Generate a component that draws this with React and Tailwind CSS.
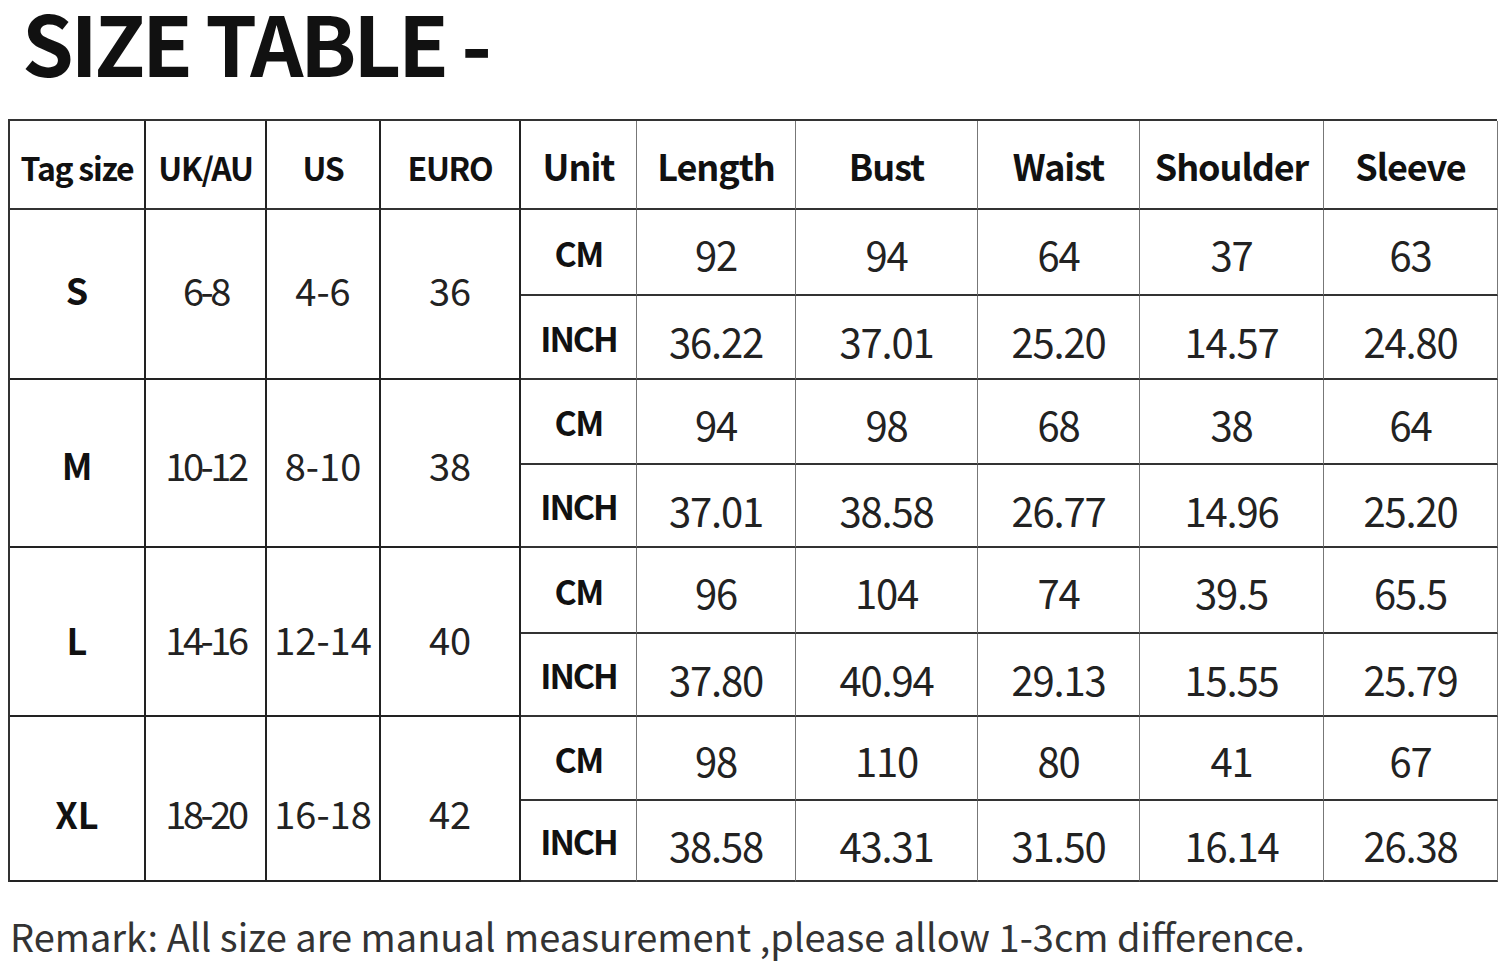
import React from 'react';

const headers = ['Tag size', 'UK/AU', 'US', 'EURO', 'Unit', 'Length', 'Bust', 'Waist', 'Shoulder', 'Sleeve'];

// pad nudges the merged size cells the way the original artwork sits
const sizes = [
    { tag: 'S', uk: '6-8', us: '4-6', euro: '36', pad: 'pb-[10px]', cm: ['92', '94', '64', '37', '63'], inch: ['36.22', '37.01', '25.20', '14.57', '24.80'] },
    { tag: 'M', uk: '10-12', us: '8-10', euro: '38', pad: 'pt-[2px]', cm: ['94', '98', '68', '38', '64'], inch: ['37.01', '38.58', '26.77', '14.96', '25.20'] },
    { tag: 'L', uk: '14-16', us: '12-14', euro: '40', pad: 'pt-[14px]', cm: ['96', '104', '74', '39.5', '65.5'], inch: ['37.80', '40.94', '29.13', '15.55', '25.79'] },
    { tag: 'XL', uk: '18-20', us: '16-18', euro: '42', pad: 'pt-[28px]', cm: ['98', '110', '80', '41', '67'], inch: ['38.58', '43.31', '31.50', '16.14', '26.38'] },
];

const font = { fontFamily: '"Noto Sans CJK SC", "Noto Sans", sans-serif' };

const App = () => {
    return (
        <div className="w-[1500px] h-[962px] bg-white text-black overflow-hidden" style={font}>
            <div className="h-[119px] pl-[22px]">
                <h1 className="w-[560px] pr-4 text-[83px] leading-[83px] font-bold tracking-[-0.04em] text-[#111] whitespace-nowrap">
                    SIZE TABLE -
                </h1>
            </div>

            <div className="ml-[8px] w-[1489px] grid grid-cols-[136px_121px_114px_140px_116px_159px_182px_162px_184px_174px] grid-rows-[89px_86px_84px_85px_83px_86px_83px_84px_81px] border-t-2 border-l-2 border-[#333]">
                {headers.map((h, i) => (
                    <div
                        key={h}
                        className={`flex items-center justify-center border-b-2 border-b-[#333] font-bold text-[#111] ${i < 4 ? 'border-r-2 border-r-[#222] text-[32px] tracking-[-0.04em] pt-1' : 'border-r border-r-[#777] text-[36px] tracking-[-0.03em]'}`}
                    >
                        {h}
                    </div>
                ))}

                {sizes.map((s) => (
                    <React.Fragment key={s.tag}>
                        <div className={`row-span-2 flex items-center justify-center border-r-2 border-b-2 border-[#222] text-[36px] font-bold text-[#111] ${s.pad}`}>
                            {s.tag}
                        </div>
                        <div className={`row-span-2 flex items-center justify-center border-r-2 border-b-2 border-[#222] text-[38px] tracking-[-0.09em] text-[#222] ${s.pad}`}>
                            {s.uk}
                        </div>
                        <div className={`row-span-2 flex items-center justify-center border-r-2 border-b-2 border-[#222] text-[38px] text-[#222] ${s.pad}`}>
                            {s.us}
                        </div>
                        <div className={`row-span-2 flex items-center justify-center border-r-2 border-b-2 border-[#222] text-[38px] text-[#222] ${s.pad}`}>
                            {s.euro}
                        </div>

                        <div className="flex items-center justify-center border-r border-r-[#777] border-b-2 border-b-[#333] text-[34px] font-bold tracking-[-0.05em] text-[#111]">
                            CM
                        </div>
                        {s.cm.map((v, i) => (
                            <div key={'cm' + i} className="flex items-center justify-center border-r border-r-[#777] border-b-2 border-b-[#333] text-[40px] tracking-[-0.03em] text-[#222] pt-1">
                                {v}
                            </div>
                        ))}

                        <div className="flex items-center justify-center border-r border-r-[#777] border-b-2 border-b-[#333] text-[34px] font-bold tracking-[-0.06em] text-[#111]">
                            INCH
                        </div>
                        {s.inch.map((v, i) => (
                            <div key={'in' + i} className="flex items-center justify-center border-r border-r-[#777] border-b-2 border-b-[#333] text-[40px] tracking-[-0.03em] text-[#222] pt-2">
                                {v}
                            </div>
                        ))}
                    </React.Fragment>
                ))}
            </div>

            <p className="pl-[10px] pt-[30px] text-[38px] leading-[48px] text-[#333] whitespace-nowrap">
                Remark: All size are manual measurement ,please allow 1-3cm difference.
            </p>
        </div>
    );
};

export default App;
